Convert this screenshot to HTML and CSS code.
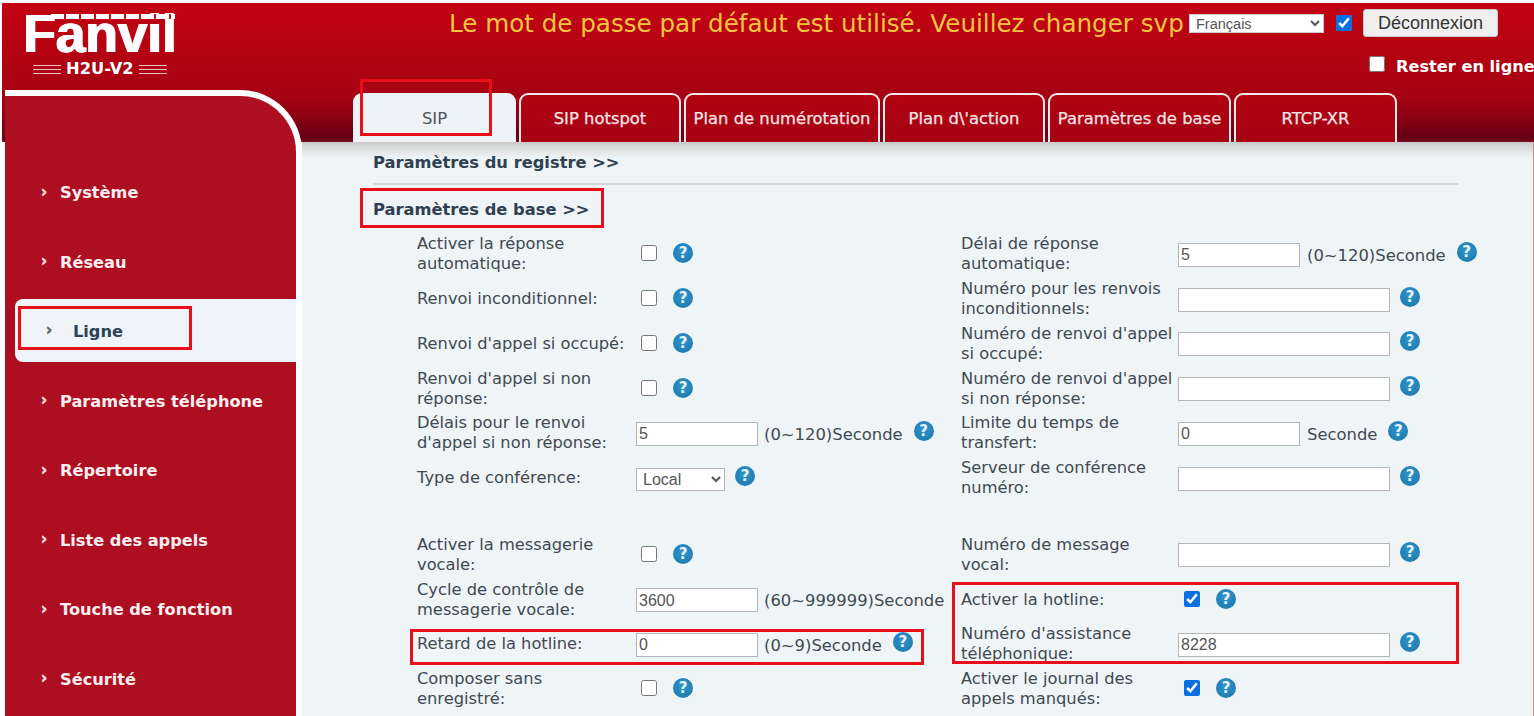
FILE: index.html
```html
<!DOCTYPE html>
<html lang="fr">
<head>
<meta charset="utf-8">
<title>Fanvil H2U-V2</title>
<link rel="stylesheet" href="styles.css">
</head>
<body>
<div class="shell">
  <aside class="left">
    <div class="logo">
      <div class="logo-word">Fanvil</div>
      <div class="logo-model"><span class="logo-lines"></span><span>H2U-V2</span><span class="logo-lines"></span></div>
    </div>
    <nav class="side">
      <a class="nav"><span class="chev">›</span>Système</a>
      <a class="nav"><span class="chev">›</span>Réseau</a>
      <a class="nav active"><span class="chev">›</span>Ligne</a>
      <a class="nav"><span class="chev">›</span>Paramètres téléphone</a>
      <a class="nav"><span class="chev">›</span>Répertoire</a>
      <a class="nav"><span class="chev">›</span>Liste des appels</a>
      <a class="nav"><span class="chev">›</span>Touche de fonction</a>
      <a class="nav"><span class="chev">›</span>Sécurité</a>
    </nav>
  </aside>
  <main class="right">
    <header class="top">
      <div class="top-row">
        <span class="warn">Le mot de passe par défaut est utilisé. Veuillez changer svp</span>
        <select class="lang"><option>Français</option></select>
        <input class="check" type="checkbox" checked>
        <button class="logout">Déconnexion</button>
      </div>
      <label class="stay"><input class="check" type="checkbox"><b>Rester en ligne</b></label>
    </header>
    <div class="tabs">
      <a class="tab on t1">SIP</a>
      <a class="tab t2">SIP hotspot</a>
      <a class="tab t3">Plan de numérotation</a>
      <a class="tab t4">Plan d\'action</a>
      <a class="tab t5">Paramètres de base</a>
      <a class="tab t6">RTCP-XR</a>
    </div>
    <section class="content">
      <h3 class="sec first">Paramètres du registre &gt;&gt;</h3>
      <hr class="rule">
      <h3 class="sec">Paramètres de base &gt;&gt;</h3>
      <div class="form">
        <div class="f"><label>Activer la réponse automatique:</label><input class="check c" type="checkbox"><i class="help">?</i></div>
        <div class="f rc"><label>Délai de réponse automatique:</label><input class="txt s" value="5"><span class="unit">(0~120)Seconde</span><i class="help up">?</i></div>

        <div class="f"><label>Renvoi inconditionnel:</label><input class="check c" type="checkbox"><i class="help">?</i></div>
        <div class="f rc"><label>Numéro pour les renvois inconditionnels:</label><input class="txt w"><i class="help up">?</i></div>

        <div class="f"><label>Renvoi d'appel si occupé:</label><input class="check c" type="checkbox"><i class="help">?</i></div>
        <div class="f rc"><label>Numéro de renvoi d'appel si occupé:</label><input class="txt w"><i class="help up">?</i></div>

        <div class="f"><label>Renvoi d'appel si non réponse:</label><input class="check c" type="checkbox"><i class="help">?</i></div>
        <div class="f rc"><label>Numéro de renvoi d'appel si non réponse:</label><input class="txt w"><i class="help up">?</i></div>

        <div class="f"><label>Délais pour le renvoi d'appel si non réponse:</label><input class="txt s" value="5"><span class="unit">(0~120)Seconde</span><i class="help up">?</i></div>
        <div class="f rc"><label>Limite du temps de transfert:</label><input class="txt s" value="0"><span class="unit">Seconde</span><i class="help up">?</i></div>

        <div class="f"><label>Type de conférence:</label><select class="conf"><option>Local</option></select><i class="help up">?</i></div>
        <div class="f rc"><label>Serveur de conférence numéro:</label><input class="txt w"><i class="help up">?</i></div>

        <div class="spacer"></div>

        <div class="f"><label>Activer la messagerie vocale:</label><input class="check c" type="checkbox"><i class="help">?</i></div>
        <div class="f rc"><label>Numéro de message vocal:</label><input class="txt w"><i class="help up">?</i></div>

        <div class="f"><label>Cycle de contrôle de messagerie vocale:</label><input class="txt s" value="3600"><span class="unit">(60~999999)Seconde</span></div>
        <div class="f rc"><label>Activer la hotline:</label><input class="check c" type="checkbox" checked><i class="help">?</i></div>

        <div class="f"><label>Retard de la hotline:</label><input class="txt s" value="0"><span class="unit">(0~9)Seconde</span><i class="help up">?</i></div>
        <div class="f rc"><label>Numéro d'assistance téléphonique:</label><input class="txt w" value="8228"><i class="help up">?</i></div>

        <div class="f"><label>Composer sans<br>enregistré:</label><input class="check c" type="checkbox"><i class="help">?</i></div>
        <div class="f rc"><label>Activer le journal des appels manqués:</label><input class="check c" type="checkbox" checked><i class="help">?</i></div>
      </div>
    </section>
  </main>
</div>
<div class="mark m1"></div>
<div class="mark m2"></div>
<div class="mark m3"></div>
<div class="mark m4"></div>
<div class="mark m5"></div>
</body>
</html>
```
FILE: styles.css
```css
* { box-sizing: border-box; }
html, body { margin: 0; height: 716px; overflow: hidden; background: #fff; }
body { position: relative; font-family: "DejaVu Sans", Verdana, sans-serif; font-size: 16.3px; color: #3b4650; }

.shell { position: relative; display: grid; grid-template-columns: 302px 1232px; height: 716px; padding-top: 3px; }
.shell::before { content: ""; position: absolute; left: 2px; right: 0; top: 3px; height: 139px;
  background: linear-gradient(#c20312 0, #b00312 45%, #a20313 70%, #8c0214 82%, #650014 97%, #7a1020 100%); }

.left { position: relative; display: flex; flex-direction: column; padding-left: 5px; min-width: 0; }
.logo { height: 87px; padding: 8px 0 0 18px; color: #fff; }
.logo-word { position: relative; font: 700 53.5px/46px "Liberation Sans", Arial, sans-serif; width: 152px; height: 46px; letter-spacing: -.2px; white-space: nowrap; text-shadow: 1px 0 0 #fff, -.5px 0 0 #fff; }
.logo-word::after { content: ""; position: absolute; left: 28px; top: 3px; width: 124px; height: 5px; background: repeating-linear-gradient(90deg, #fff 0 13px, #c30c1c 13px 15px); }
.logo-model { display: flex; align-items: center; gap: 5px; margin-top: 4px; font: 700 16.3px/16px "DejaVu Sans", sans-serif; padding-left: 10px; }
.logo-lines { width: 28px; height: 9px; background: repeating-linear-gradient(rgba(255,255,255,.75) 0 1px, transparent 1px 4px); }

.side { flex: 1; display: flex; flex-direction: column; padding-top: 67px; background: #ae0f20;
  border-top: 6px solid #fff; border-right: 6px solid #fff; border-top-right-radius: 62px; }
.nav { position: relative; display: flex; align-items: center; height: 69.5px; padding-left: 55px; color: #fbeef0; font-weight: 700; font-size: 16.2px; flex: none; }
.chev { position: absolute; left: 36px; top: 50%; transform: translateY(-54%); font-size: 15px; color: #f7dfe2; font-weight: 700; -webkit-text-stroke: .5px currentColor; }
.nav:nth-child(1) { margin-top: -5px; }
.nav.active { height: 63px; margin: 2px 0 4.5px 10px; padding: 2px 0 0 58px; background: #eff4f8; color: #2c4258; border-radius: 8px 0 0 8px; }
.nav.active .chev { left: 31px; color: #56616b; }

.right { position: relative; display: flex; flex-direction: column; min-width: 0; }
.top { height: 90px; }
.top-row { display: flex; align-items: center; height: 34px; padding-left: 147px; margin-top: 3px; }
.warn { font-size: 24.6px; color: #f3c53f; white-space: nowrap; width: 740px; }
.lang { width: 135px; height: 19px; padding: 0 0 0 2px; margin: 0; border: 1px solid #ccc; background-color: #fff; color: #555; font: 14.5px "Liberation Sans", Arial, sans-serif; border-radius: 0; }
.check { width: 16px; height: 16px; margin: 0; accent-color: #0b6fe3; flex: none; }
.top-row .check { margin-left: 12px; }
.logout { margin-left: 11px; width: 135px; height: 28px; padding: 0; background: #efefef; border: 1px solid #c8c8c8; border-radius: 3px; color: #333; font: 18px "Liberation Sans", Arial, sans-serif; }
.stay { display: flex; align-items: center; margin: 17px 0 0 1067px; color: #fff; font-size: 16.2px; white-space: nowrap; }
.stay .check { margin: -6px 11px 0 0; }

.tabs { display: flex; gap: 3px; height: 49px; padding-left: 51px; position: relative; }
.tab { display: flex; align-items: center; justify-content: center; height: 49px; padding-bottom: 1px; border: 2px solid #f5e8ea; border-bottom: 0; border-radius: 9px 9px 0 0; background: linear-gradient(#b10210, #a60314); color: #f8e3e5; font-size: 16.4px; white-space: nowrap; -webkit-text-stroke: .25px #f8e3e5; }
.tab.on { background: #eef3f7; border-color: #eef3f7; color: #4a545c; -webkit-text-stroke: 0; }
.t1 { width: 163px; } .t2 { width: 162px; } .t3 { width: 196px; } .t4 { width: 162px; } .t5 { width: 183px; } .t6 { width: 163px; }

.content { flex: 1; padding: 11px 0 0 71px; background: linear-gradient(#c9c9c9 0, #e4e6e7 10px, #eff4f7 16px); border-right: 1px solid #c98a8f; }
.sec { margin: 0; height: 20px; font-size: 16.3px; line-height: 20px; font-weight: 700; color: #2f4050; }
.rule { width: 1085px; height: 2px; margin: 10px 0 15px; border: 0; background: #d2d6d9; }

.form { display: grid; grid-template-columns: 544px 1fr; grid-template-rows: repeat(6, 44.75px) 32px repeat(4, 44.75px); margin-top: 12px; }
.spacer { grid-column: 1 / -1; }
.f { display: flex; align-items: center; padding-left: 44px; min-width: 0; white-space: nowrap; }
.f label { width: 219px; flex: none; white-space: normal; line-height: 20px; color: #3f4a52; }
.f.rc label { width: 217px; }
.c { margin-left: 5px; margin-top: -2px; }
.rc .c { margin-left: 6px; }
.help { flex: none; width: 20px; height: 20px; margin-left: 16px; margin-top: -2px; border-radius: 50%; background: radial-gradient(circle at 50% 40%, #2f95cc, #1a75a8); color: #e9f2f7; font: 700 15px/20px "DejaVu Sans", sans-serif; text-align: center; }
.help.up { margin-left: 10px; margin-top: -5px; }
.unit + .help.up { margin-left: 11px; }
.txt { height: 24px; padding: 1px 2px 0; margin-top: 1px; border: 1px solid #b2b6b9; border-radius: 0; background: #fff; color: #555; font: 16px "Liberation Sans", Arial, sans-serif; flex: none; outline: 0; }
.s { width: 122px; }
.w { width: 212px; }
.unit { margin: 2px 0 0 6px; color: #3f4a52; font-size: 16.4px; }
.rc .unit { margin-left: 7px; }
.conf { width: 89px; height: 23px; margin-top: 3px; padding-left: 2px; background: #fff; border: 1px solid #b2b6b9; border-radius: 0; color: #555; font: 16px "Liberation Sans", Arial, sans-serif; }

.mark { position: absolute; border: 3px solid #e80f1a; pointer-events: none; }
.m1 { left: 360px; top: 79px; width: 132px; height: 57px; }
.m2 { left: 360px; top: 188px; width: 244px; height: 40px; }
.m3 { left: 18px; top: 306px; width: 174px; height: 44px; }
.m4 { left: 410px; top: 629px; width: 514px; height: 36px; }
.m5 { left: 952px; top: 582px; width: 507px; height: 82px; }
```
